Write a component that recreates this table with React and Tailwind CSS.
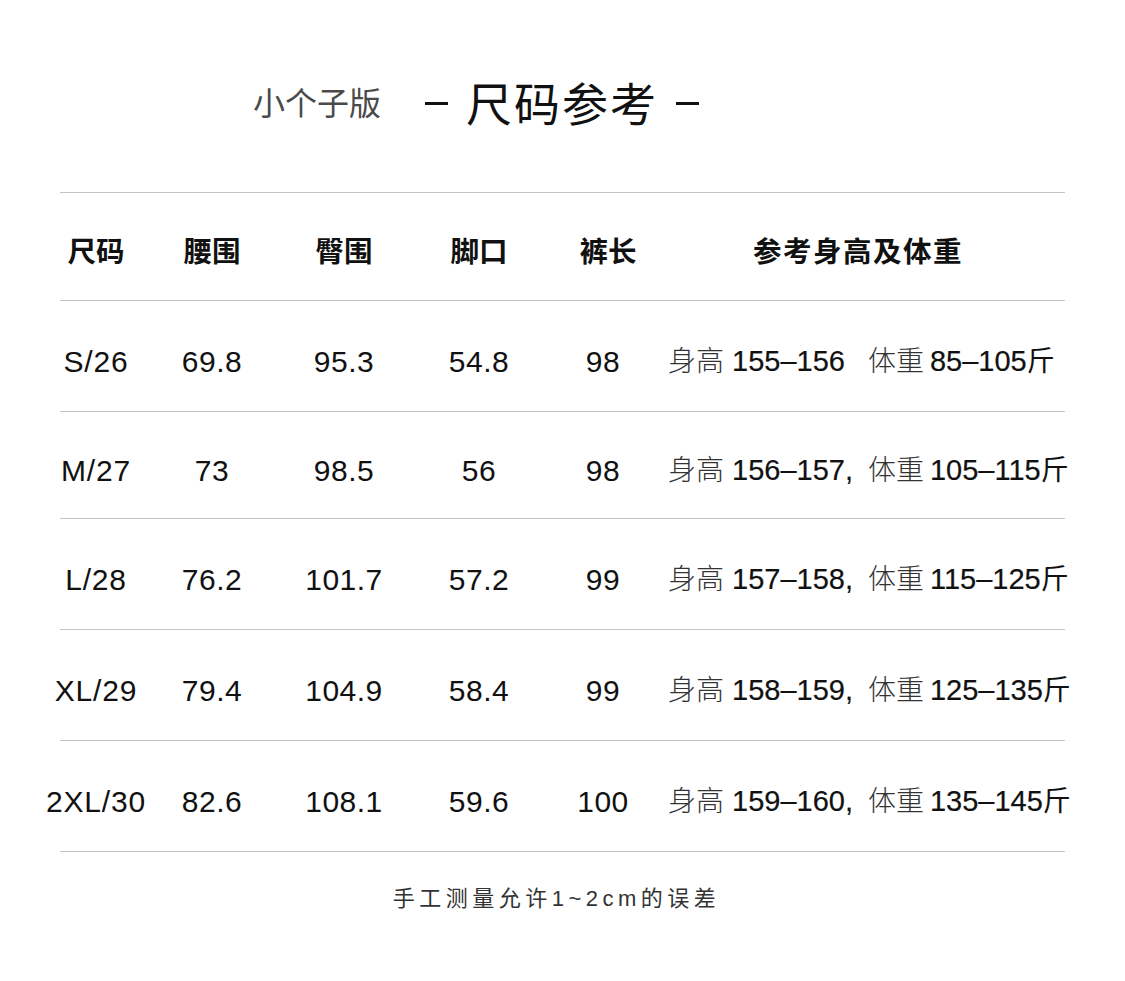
import React from 'react'

const LATIN = 'font-["Liberation_Sans","Noto_Sans_CJK_SC",sans-serif]'
const CJK = 'font-["Noto_Sans_CJK_SC",sans-serif]'

const ROWS = [
  { size: 'S/26', waist: '69.8', hip: '95.3', hem: '54.8', len: '98', h: '155–156', comma: false, w: '85–105', height: 'h-[110px]' },
  { size: 'M/27', waist: '73', hip: '98.5', hem: '56', len: '98', h: '156–157', comma: true, w: '105–115', height: 'h-[106px]' },
  { size: 'L/28', waist: '76.2', hip: '101.7', hem: '57.2', len: '99', h: '157–158', comma: true, w: '115–125', height: 'h-[110px]' },
  { size: 'XL/29', waist: '79.4', hip: '104.9', hem: '58.4', len: '99', h: '158–159', comma: true, w: '125–135', height: 'h-[110px]' },
  { size: '2XL/30', waist: '82.6', hip: '108.1', hem: '59.6', len: '100', h: '159–160', comma: true, w: '135–145', height: 'h-[110px]' },
]

function Line() {
  return <div className="mx-[60px] h-px bg-[#c4c4c4]" />
}

export default function App() {
  return (
    <div className="w-[1125px] h-[981px] bg-white text-[#111]">
      {/* Title */}
      <div className="h-[192px] pl-[253px] pb-[14px] pt-[24px] flex items-center">
        <span className={`${CJK} text-[32px] text-[#4a4a4a] font-normal`}>小个子版</span>
        <span className={`${CJK} ml-[44px] text-[46px] font-normal text-[#111] flex items-center gap-[18px]`}>
          <span className="w-[23px] h-[3px] bg-[#111] mt-[4px]" />
          <span className="tracking-[2px]">尺码参考</span>
          <span className="w-[23px] h-[3px] bg-[#111] mt-[4px]" />
        </span>
      </div>

      <Line />

      {/* Header */}
      <div className={`${CJK} h-[107px] pt-[7px] flex items-center text-[28.5px] font-bold`}>
        <div className="ml-[36px] w-[120px] text-center">尺码</div>
        <div className="w-[112px] text-center">腰围</div>
        <div className="w-[152px] text-center">臀围</div>
        <div className="w-[118px] text-center">脚口</div>
        <div className="w-[130px] pl-[10px] text-center">裤长</div>
        <div className="w-[380px] text-center tracking-[1.5px]">参考身高及体重</div>
      </div>

      <Line />

      {ROWS.map(r => (
        <React.Fragment key={r.size}>
          <div className={`${r.height} pt-[10px] flex items-center text-[29px]`}>
            <div className={`${LATIN} ml-[36px] w-[120px] text-center text-[30px] tracking-[0.8px]`}>{r.size}</div>
            <div className={`${LATIN} w-[112px] text-center text-[30px] tracking-[0.5px]`}>{r.waist}</div>
            <div className={`${LATIN} w-[152px] text-center text-[30px] tracking-[0.5px]`}>{r.hip}</div>
            <div className={`${LATIN} w-[118px] text-center text-[30px] tracking-[0.5px]`}>{r.hem}</div>
            <div className={`${LATIN} w-[130px] text-center text-[30px] tracking-[0.5px]`}>{r.len}</div>
            <div className="flex items-baseline whitespace-nowrap">
              <span className={`${CJK} text-[28px] font-light text-[#333]`}>身高</span>
              <span className={`${LATIN} ml-[8px] [-webkit-text-stroke:0.2px_#111]`}>{r.h}</span>
              <span className={`${LATIN} w-[23px] [-webkit-text-stroke:0.2px_#111]`}>{r.comma ? ',' : ''}</span>
              <span className={`${CJK} text-[28px] font-light text-[#333]`}>体重</span>
              <span className={`${LATIN} ml-[6px] [-webkit-text-stroke:0.2px_#111]`}>{r.w}</span>
              <span className={`${CJK} text-[28px] font-normal`}>斤</span>
            </div>
          </div>
          <Line />
        </React.Fragment>
      ))}

      {/* Footer */}
      <div className={`${LATIN} pt-[30px] pr-[12px] text-center text-[22px] tracking-[4.5px] text-[#333]`}>
        手工测量允许1~2cm的误差
      </div>
    </div>
  )
}
